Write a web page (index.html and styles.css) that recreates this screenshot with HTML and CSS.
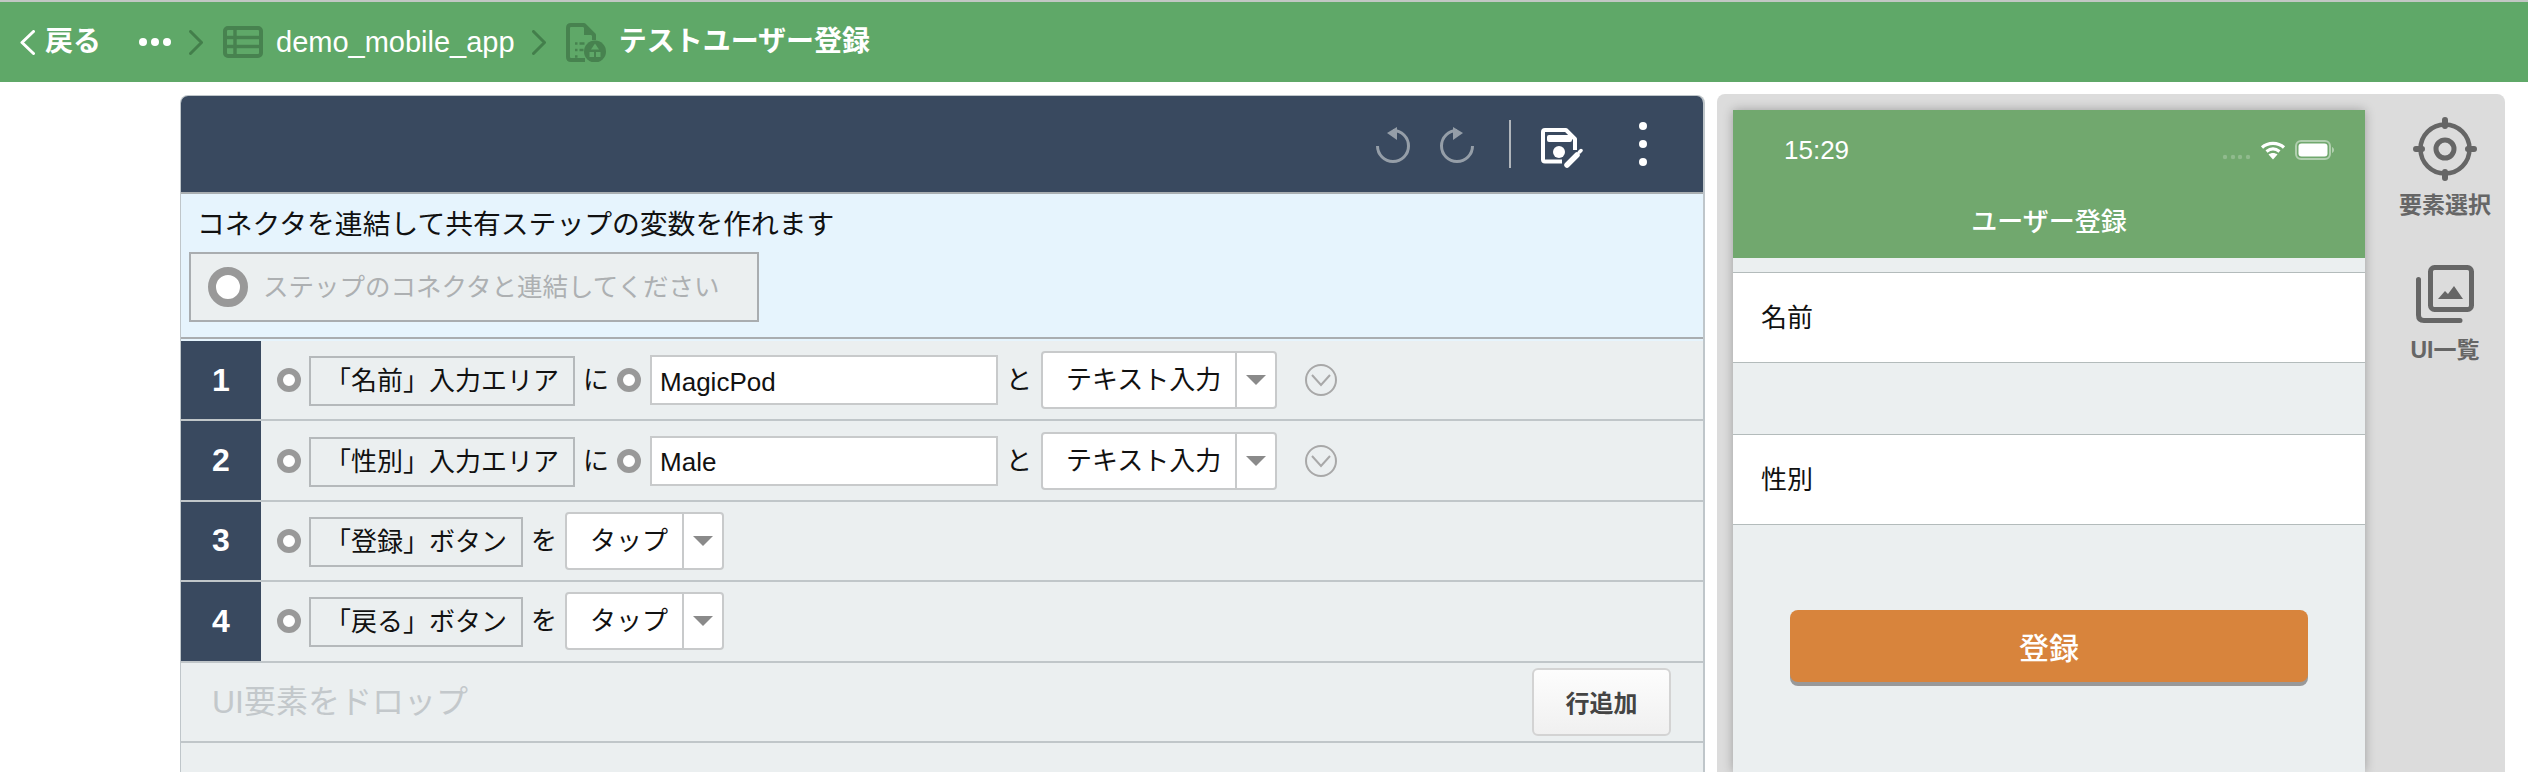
FILE: index.html
```html
<!DOCTYPE html>
<html lang="ja">
<head>
<meta charset="utf-8">
<title>テストユーザー登録</title>
<link rel="stylesheet" href="styles.css">
</head>
<body>
<header class="topbar">
  <svg class="tb-back" width="15" height="25" viewBox="0 0 15 25"><path d="M13.5 1.5 2 12.5l11.5 11" fill="none" stroke="#fff" stroke-width="3" stroke-linecap="round" stroke-linejoin="round"/></svg>
  <span class="tb-backtext">戻る</span>
  <svg class="tb-dots" width="32" height="8" viewBox="0 0 32 8"><circle cx="4" cy="4" r="4" fill="#fff"/><circle cx="16" cy="4" r="4" fill="#fff"/><circle cx="28" cy="4" r="4" fill="#fff"/></svg>
  <svg class="tb-sep" width="14" height="25" viewBox="0 0 14 25"><path d="M1.5 1.5 12.5 12.5 1.5 23.5" fill="none" stroke="#437f4b" stroke-width="3" stroke-linecap="round" stroke-linejoin="round"/></svg>
  <svg class="tb-table" width="40" height="32" viewBox="0 0 40 32"><rect x="2" y="2" width="36" height="28" rx="3" fill="none" stroke="#47824f" stroke-width="4"/><path d="M2 11.5h36M2 20.5h36M12 2v28" stroke="#47824f" stroke-width="3.4"/></svg>
  <span class="tb-app">demo_mobile_app</span>
  <svg class="tb-sep2" width="14" height="25" viewBox="0 0 14 25"><path d="M1.5 1.5 12.5 12.5 1.5 23.5" fill="none" stroke="#437f4b" stroke-width="3" stroke-linecap="round" stroke-linejoin="round"/></svg>
  <svg class="tb-doc" width="40" height="39" viewBox="0 0 40 39">
    <path d="M19 37H5q-3 0-3-3V5q0-3 3-3h13l10 10v5" fill="none" stroke="#47824f" stroke-width="4" stroke-linejoin="round"/>
    <path d="M18 2v10h10z" fill="#47824f"/>
    <path d="M9 20.500h2.500M9 27h2.500M9 33.500h2.500M13.500 20.500h5M13.500 27h4" stroke="#47824f" stroke-width="2.600"/>
    <circle cx="29" cy="28.500" r="11" fill="#47824f"/>
    <path d="M29 20.500l4 6h-8z" fill="#5fa868"/>
    <rect x="23.500" y="29" width="4.500" height="5" fill="#5fa868"/><rect x="30" y="29" width="4.500" height="5" fill="#5fa868"/>
  </svg>
  <strong class="tb-title">テストユーザー登録</strong>
</header>

<main class="workspace">
  <section class="editor">
    <div class="editor-head">
      <svg class="ic-undo" width="36" height="60" viewBox="0 0 36 60"><path d="M18 16.500A15.500 15.500 0 1 1 2.500 32" fill="none" stroke="#959ea8" stroke-width="3"/><path d="M12 19 22 13v13z" fill="#959ea8"/></svg>
      <svg class="ic-redo" width="36" height="60" viewBox="0 0 36 60"><path d="M18 16.500A15.500 15.500 0 1 0 33.500 32" fill="none" stroke="#959ea8" stroke-width="3"/><path d="M24 19 14 13v13z" fill="#959ea8"/></svg>
      <div class="head-rule"></div>
      <svg class="ic-save" width="42" height="60" viewBox="0 0 42 60">
        <path d="M21 47.500H4q-2 0-2-2V18q0-2 2-2h21l9 9v11" fill="none" stroke="#fff" stroke-width="4" stroke-linejoin="round"/>
        <rect x="6" y="21" width="25" height="7" rx="2" fill="#fff"/>
        <circle cx="18" cy="38" r="6" fill="#fff"/>
        <path d="M26 51 36 41" stroke="#fff" stroke-width="5.500" stroke-linecap="round"/>
        <path d="M38.500 38 40 36.500" stroke="#fff" stroke-width="3.500" stroke-linecap="round"/>
      </svg>
      <svg class="ic-kebab" width="8" height="60" viewBox="0 0 8 60"><circle cx="4" cy="12" r="4" fill="#fff"/><circle cx="4" cy="30" r="4" fill="#fff"/><circle cx="4" cy="48" r="4" fill="#fff"/></svg>
    </div>

    <div class="vars">
      <p class="vars-note">コネクタを連結して共有ステップの変数を作れます</p>
      <div class="vars-box"><span class="ring-big"></span><span class="vars-hint">ステップのコネクタと連結してください</span></div>
    </div>

    <div class="steps">
      <div class="step">
        <div class="step-num">1</div>
        <span class="ring"></span>
        <span class="chip">「名前」入力エリア</span>
        <span class="part">に</span>
        <span class="ring ring-arg"></span>
        <input class="arg" value="MagicPod" readonly>
        <span class="part part-to">と</span>
        <div class="sel"><span class="sel-text">テキスト入力</span><span class="sel-arrow"></span></div>
        <svg class="more" width="32" height="32" viewBox="0 0 32 32"><circle cx="16" cy="16" r="15" fill="none" stroke="#a8a8a8" stroke-width="2"/><path d="M7 11l9 10 9-10" fill="none" stroke="#a8a8a8" stroke-width="2"/></svg>
      </div>
      <div class="step">
        <div class="step-num">2</div>
        <span class="ring"></span>
        <span class="chip">「性別」入力エリア</span>
        <span class="part">に</span>
        <span class="ring ring-arg"></span>
        <input class="arg" value="Male" readonly>
        <span class="part part-to">と</span>
        <div class="sel"><span class="sel-text">テキスト入力</span><span class="sel-arrow"></span></div>
        <svg class="more" width="32" height="32" viewBox="0 0 32 32"><circle cx="16" cy="16" r="15" fill="none" stroke="#a8a8a8" stroke-width="2"/><path d="M7 11l9 10 9-10" fill="none" stroke="#a8a8a8" stroke-width="2"/></svg>
      </div>
      <div class="step">
        <div class="step-num">3</div>
        <span class="ring"></span>
        <span class="chip">「登録」ボタン</span>
        <span class="part">を</span>
        <div class="sel"><span class="sel-text">タップ</span><span class="sel-arrow"></span></div>
      </div>
      <div class="step">
        <div class="step-num">4</div>
        <span class="ring"></span>
        <span class="chip">「戻る」ボタン</span>
        <span class="part">を</span>
        <div class="sel"><span class="sel-text">タップ</span><span class="sel-arrow"></span></div>
      </div>
      <div class="step step-drop">
        <span class="drop-text">UI要素をドロップ</span>
        <button class="add-row">行追加</button>
      </div>
    </div>
  </section>

  <section class="device">
    <div class="phone">
      <div class="phone-head">
        <div class="status">
          <span class="clock">15:29</span>
          <svg class="sig" width="29" height="20" viewBox="0 0 29 20"><g fill="#fff" fill-opacity=".22"><circle cx="3" cy="17" r="2.200"/><circle cx="11" cy="17" r="2.200"/><circle cx="18" cy="17" r="2.200"/><circle cx="26" cy="17" r="2.200"/></g></svg>
          <svg class="wifi" width="26" height="20" viewBox="0 0 26 20"><path d="M2 7.500C8 2 18 2 24 7.500M6.500 11.500c4-3.200 9-3.200 13 0" fill="none" stroke="#fff" stroke-width="3.200"/><path d="M13 19.500l-4.500-5c2.700-2 6.300-2 9 0z" fill="#fff"/></svg>
          <svg class="batt" width="39" height="20" viewBox="0 0 39 20"><rect x="1" y="1" width="34" height="18" rx="5" fill="none" stroke="#fff" stroke-opacity=".45" stroke-width="2"/><rect x="3.500" y="3.500" width="29" height="13" rx="3" fill="#fff"/><path d="M37 7v6c1.300-.5 2-1.700 2-3s-.7-2.500-2-3z" fill="#fff" fill-opacity=".45"/></svg>
        </div>
        <div class="nav-title">ユーザー登録</div>
      </div>
      <div class="cell cell-first">名前</div>
      <div class="cell cell-second">性別</div>
      <button class="primary">登録</button>
    </div>
    <aside class="tools">
      <div class="tool">
        <svg class="tool-target" width="64" height="64" viewBox="0 0 64 64"><g fill="none" stroke="#666"><circle cx="32" cy="32" r="24.500" stroke-width="4.500"/><circle cx="32" cy="32" r="9" stroke-width="5"/><path d="M32 3v6M32 55v6M3 32h6M55 32h6" stroke-width="6" stroke-linecap="round"/></g></svg>
        <span class="tool-label">要素選択</span>
      </div>
      <div class="tool tool-list">
        <svg class="tool-ui" width="58" height="58" viewBox="0 0 58 58"><g fill="none" stroke="#666" stroke-width="5"><rect x="14.500" y="2.500" width="41" height="42" rx="4"/><path d="M2.500 14.500V50q0 5.500 5.500 5.500h36" stroke-linecap="round"/></g><path d="M22 34l7-8 3 3 6-8 9 13z" fill="#666"/></svg>
        <span class="tool-label">UI一覧</span>
      </div>
    </aside>
  </section>
</main>
</body>
</html>
```

FILE: styles.css
```css
* { box-sizing: border-box; }
html, body { margin: 0; height: 100%; overflow: hidden; background: #fff; }
body {
  display: flex;
  flex-direction: column;
  font-family: "Liberation Sans", "Noto Sans CJK JP", sans-serif;
  color: #111;
}

/* top bar */
.topbar {
  flex: none;
  height: 82px;
  display: flex;
  align-items: center;
  padding-left: 20px;
  background: #5fa868;
  border-top: 2px solid #c2c7c4;
  color: #fff;
}
.tb-backtext { margin-left: 10px; font-size: 28px; font-weight: 700; line-height: 40px; }
.tb-dots { margin-left: 38px; }
.tb-sep { margin-left: 18px; }
.tb-table { margin-left: 20px; }
.tb-app { margin-left: 13px; font-size: 29px; line-height: 40px; }
.tb-sep2 { margin-left: 17px; }
.tb-doc { margin-left: 20px; }
.tb-title { margin-left: 13px; font-size: 28px; line-height: 40px; font-weight: 700; }

/* layout */
.workspace {
  flex: 1;
  min-height: 0;
  display: flex;
  align-items: stretch;
  padding: 12px 0 0 180px;
  gap: 12px;
}

/* editor */
.editor {
  width: 1525px;
  margin-top: 1px;
  display: flex;
  flex-direction: column;
  border: solid #bfc6ca;
  border-width: 1px 2px 0 1px;
  border-radius: 8px 8px 0 0;
  background: #ebeff0;
  overflow: hidden;
}
.editor-head {
  flex: none;
  height: 98px;
  display: flex;
  align-items: center;
  justify-content: flex-end;
  padding-right: 56px;
  background: #39495f;
  border-bottom: 2px solid #a9aeb1;
}
.ic-redo { margin-left: 28px; }
.head-rule { width: 2px; height: 48px; margin-left: 34px; background: #b0b5bb; }
.ic-save { margin-left: 30px; }
.ic-kebab { margin-left: 56px; }

.vars {
  flex: none;
  height: 145px;
  background: #e6f4fd;
  border-bottom: 2px solid #a9adb0;
  padding: 12px 0 0 8px;
}
.vars-note { margin: 0 0 0 8px; font-size: 27.8px; line-height: 38px; color: #111; }
.vars-box {
  width: 570px;
  height: 70px;
  margin-top: 8px;
  display: flex;
  align-items: center;
  padding-left: 17px;
  background: #ebeff0;
  border: 2px solid #a9adb0;
}
.ring-big {
  width: 40px;
  height: 40px;
  border: 8px solid #999;
  border-radius: 50%;
  background: #fff;
}
.vars-hint { margin-left: 15px; font-size: 25.5px; color: #adb0b2; line-height: 36px; }

.steps { flex: 1; border-top: 2px solid #e6f4fd; }
.step {
  height: 80.4px;
  display: flex;
  align-items: center;
  border-bottom: 2px solid #c0c6c9;
  font-size: 26px;
}
.step-num {
  flex: none;
  align-self: stretch;
  width: 80px;
  margin-right: 16px;
  display: flex;
  align-items: center;
  justify-content: center;
  background: #39495f;
  color: #fff;
  font-size: 32px;
  font-weight: 700;
}
.ring {
  flex: none;
  width: 24px;
  height: 24px;
  border: 6px solid #999;
  border-radius: 50%;
  background: #fff;
}
.ring-arg { margin-left: 8px; }
.chip {
  flex: none;
  height: 50px;
  margin-left: 8px;
  padding: 0 14px;
  display: flex;
  align-items: center;
  background: #ebeff0;
  border: 2px solid #b5b9bb;
  line-height: 46px;
  white-space: nowrap;
  position: relative;
  top: 1px;
}
.part { flex: none; margin-left: 8px; line-height: 40px; }
.part-to { margin-right: 9px; }
.arg {
  flex: none;
  width: 348px;
  height: 50px;
  margin-left: 9px;
  padding: 4px 8px 0;
  border: 2px solid #c8cacb;
  background: #fff;
  font: 26px "Liberation Sans", "Noto Sans CJK JP", sans-serif;
  color: #111;
  outline: none;
}
.sel {
  flex: none;
  height: 58px;
  display: flex;
  background: #fff;
  border: 2px solid #c8cacb;
  border-radius: 4px;
}
.part + .sel { margin-left: 8px; }
.part-to + .sel { margin-left: 0; }
.sel-text {
  padding: 0 14px 0 23px;
  border-right: 2px solid #c8cacb;
  line-height: 54px;
  white-space: nowrap;
}
.sel-arrow {
  width: 38px;
  display: flex;
  align-items: center;
  justify-content: center;
}
.sel-arrow::after {
  content: "";
  border-left: 10px solid transparent;
  border-right: 10px solid transparent;
  border-top: 10px solid #8a8a8a;
}
.more { flex: none; margin-left: 28px; }
.step-drop { justify-content: space-between; padding: 0 32px 0 31px; }
.drop-text { font-size: 32px; color: #c3c8cb; line-height: 44px; }
.add-row {
  width: 139px;
  height: 68px;
  padding: 0;
  border: 2px solid #d3d3d3;
  border-radius: 6px;
  background: linear-gradient(#fdfdfd, #f0f0f0);
  font: 700 24px "Liberation Sans", "Noto Sans CJK JP", sans-serif;
  color: #444;
}

/* device */
.device {
  width: 788px;
  display: flex;
  gap: 20px;
  padding: 16px 0 0 16px;
  background: #dcdcdc;
  border-radius: 8px 8px 0 0;
}
.phone {
  flex: none;
  width: 632px;
  display: flex;
  flex-direction: column;
  background: #ebeff0;
  box-shadow: 0 0 10px rgba(0, 0, 0, .28);
}
.phone-head {
  flex: none;
  height: 148px;
  background: #71a86e;
  color: #fff;
  padding-bottom: 4px;
}
.status {
  height: 80px;
  display: flex;
  align-items: center;
  padding: 0 31px 0 51px;
}
.clock { margin-right: auto; font-size: 26px; }
.wifi { margin-left: 9px; }
.batt { margin-left: 9px; }
.nav-title { height: 64px; text-align: center; font-size: 26px; font-weight: 500; line-height: 64px; }
.cell {
  flex: none;
  height: 91px;
  padding-left: 28px;
  background: #fff;
  border: solid #b3bbbb;
  border-width: 1px 0;
  font-size: 26px;
  line-height: 91px;
}
.cell-first { margin-top: 14px; }
.cell-second { margin-top: 71px; }
.primary {
  flex: none;
  width: 518px;
  height: 72px;
  margin: 85px 0 0 57px;
  padding: 0;
  border: 0;
  border-radius: 8px;
  background: #d8843c;
  box-shadow: 0 4px 0 #999;
  color: #fff;
  font: 500 30px "Liberation Sans", "Noto Sans CJK JP", sans-serif;
}
.tools { width: 120px; padding-top: 7px; display: flex; flex-direction: column; align-items: center; }
.tool { display: flex; flex-direction: column; align-items: center; }
.tool-label { font-size: 23px; font-weight: 700; color: #666; line-height: 32px; white-space: nowrap; }
.tool-target { margin-bottom: 8px; }
.tool-list { margin-top: 44px; }
.tool-ui { margin-bottom: 11px; }
```
